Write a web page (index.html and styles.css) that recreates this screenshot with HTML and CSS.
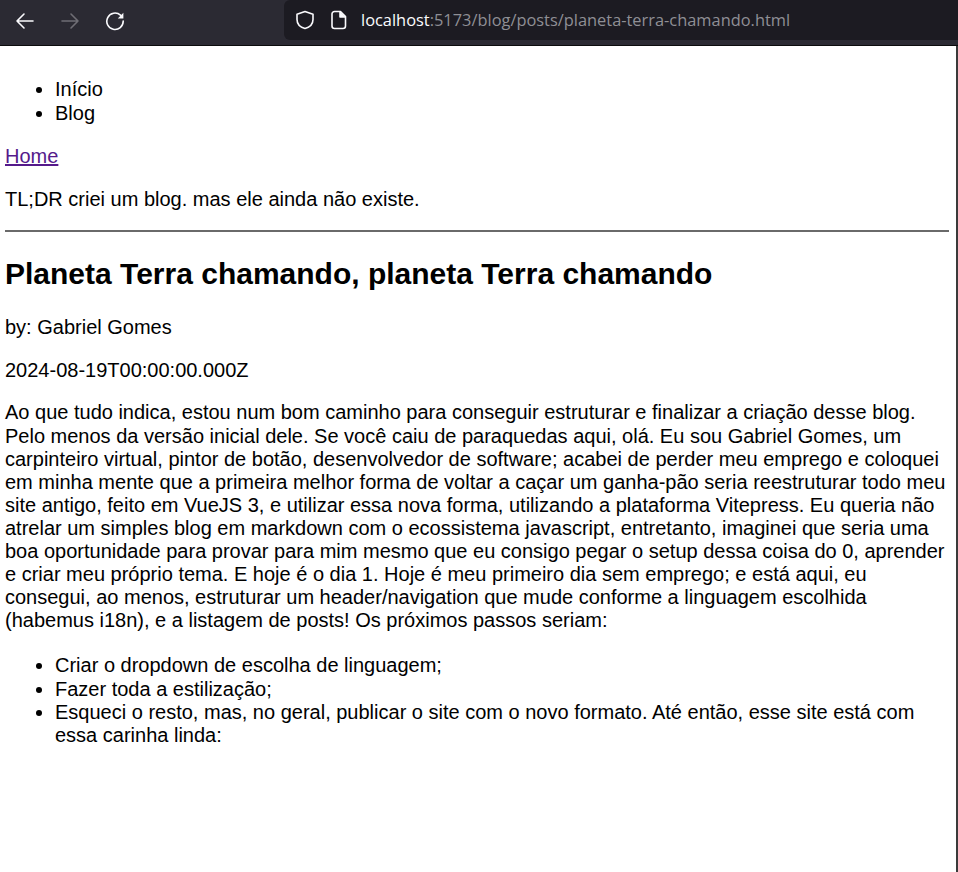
FILE: index.html
```html
<!DOCTYPE html>
<html lang="pt-BR">
<head>
  <meta charset="UTF-8">
  <title>Planeta Terra chamando, planeta Terra chamando</title>
  <link rel="stylesheet" href="styles.css">
</head>
<body>
  <div class="toolbar">
    <div class="toolbar-nav">
      <svg class="icon" viewBox="0 0 20 20" fill="none" stroke="#fbfbfe" stroke-width="1.6" stroke-linecap="round" stroke-linejoin="round"><path d="M2 10h16M9 3l-7 7 7 7"/></svg>
      <svg class="icon" viewBox="0 0 20 20" fill="none" stroke="#6f6e75" stroke-width="1.6" stroke-linecap="round" stroke-linejoin="round"><path d="M18 10H2M11 3l7 7-7 7"/></svg>
      <svg class="icon" viewBox="0 0 20 20" fill="none" stroke="#fbfbfe" stroke-width="1.6" stroke-linecap="round" stroke-linejoin="round"><path d="M15.500 4.200A8.200 8.200 0 1 0 18.200 10"/><path d="M18.400 1.800v5.600h-5.600z" fill="#fbfbfe" stroke="none"/></svg>
    </div>
    <div class="urlbar">
      <svg class="icon-shield" viewBox="0 0 20 20" fill="none" stroke="#fbfbfe" stroke-width="1.6" stroke-linejoin="round"><path d="M10 1.500l8 2.700v5.300c0 4.600-3.400 7.700-8 9-4.600-1.300-8-4.400-8-9V4.200z"/></svg>
      <svg class="icon-page" viewBox="0 0 16 20" fill="none" stroke="#fbfbfe" stroke-width="1.6" stroke-linejoin="round"><path d="M3.500 1.500h6l5 5v9.500a2.500 2.500 0 0 1-2.500 2.500h-8.500a2.500 2.500 0 0 1-2.500-2.500v-12a2.500 2.500 0 0 1 2.500-2.500z"/><path d="M9 1.500v5.500h5.500" fill="#fbfbfe"/></svg>
      <span class="url"><span class="url-host">localhost</span>:5173/blog/posts/planeta-terra-chamando.html</span>
    </div>
  </div>

  <div class="page">
    <ul class="site-nav">
      <li>Início</li>
      <li>Blog</li>
    </ul>
    <p><a href="#home">Home</a></p>
    <p class="tldr">TL;DR criei um blog. mas ele ainda não existe.</p>
    <hr>
    <h1>Planeta Terra chamando, planeta Terra chamando</h1>
    <p>by: Gabriel Gomes</p>
    <p>2024-08-19T00:00:00.000Z</p>
    <p>Ao que tudo indica, estou num bom caminho para conseguir estruturar e finalizar a criação desse blog. Pelo menos da versão inicial dele. Se você caiu de paraquedas aqui, olá. Eu sou Gabriel Gomes, um carpinteiro virtual, pintor de botão, desenvolvedor de software; acabei de perder meu emprego e coloquei em minha mente que a primeira melhor forma de voltar a caçar um ganha-pão seria reestruturar todo meu site antigo, feito em VueJS 3, e utilizar essa nova forma, utilizando a plataforma Vitepress. Eu queria não atrelar um simples blog em markdown com o ecossistema javascript, entretanto, imaginei que seria uma boa oportunidade para provar para mim mesmo que eu consigo pegar o setup dessa coisa do 0, aprender e criar meu próprio tema. E hoje é o dia 1. Hoje é meu primeiro dia sem emprego; e está aqui, eu consegui, ao menos, estruturar um header/navigation que mude conforme a linguagem escolhida (habemus i18n), e a listagem de posts! Os próximos passos seriam:</p>
    <ul class="post-list">
      <li>Criar o dropdown de escolha de linguagem;</li>
      <li>Fazer toda a estilização;</li>
      <li>Esqueci o resto, mas, no geral, publicar o site com o novo formato. Até então, esse site está com essa carinha linda:</li>
    </ul>
  </div>
</body>
</html>
```

FILE: styles.css
```css
html, body {
  height: 100%;
}

body {
  margin: 0;
  display: flex;
  flex-direction: column;
  overflow: hidden;
  background: #fff;
  color: #000;
  font-family: "Liberation Sans", Arial, sans-serif;
  font-size: 20px;
  line-height: 23.1px;
}

/* barra do navegador */
.toolbar {
  display: flex;
  flex-shrink: 0;
  height: 45px;
  background: #2b2a33;
  border-bottom: 1px solid #0c0c0d;
}

.toolbar-nav {
  display: flex;
  align-items: center;
  gap: 25px;
  width: 284px;
  height: 41px;
  padding-left: 15px;
  box-sizing: border-box;
}

.icon {
  width: 20px;
  height: 20px;
}

.urlbar {
  display: flex;
  align-items: center;
  flex: 1;
  height: 40px;
  padding-left: 11px;
  background: #1c1b22;
  border-radius: 6px 0 0 6px;
}

.icon-shield {
  width: 20px;
  height: 20px;
}

.icon-page {
  width: 16px;
  height: 20px;
  margin-left: 16px;
}

.url {
  margin-left: 14px;
  color: #8f8f95;
  font-family: "Open Sans", sans-serif;
  font-size: 16.4px;
  line-height: 20px;
}

.url-host {
  color: #fbfbfe;
}

/* conteudo */
.page {
  flex: 1;
  padding: 12.4px 7px 0 5px;
  border-right: 2px solid #3a3a3a;
}

ul {
  margin: 20px 0;
  padding-left: 50px;
}

.site-nav {
  margin-bottom: 19px;
  line-height: 23.6px;
}

.post-list {
  margin-top: 22.1px;
}

p {
  margin: 19.8px 0;
}

.tldr {
  margin-bottom: 18.9px;
}

a {
  color: #551a8b;
}

hr {
  height: 2px;
  margin: 0;
  border: 0;
  background: #6a6a6a;
}

h1 {
  margin: 24.7px 0;
  font-size: 30px;
  line-height: 34px;
}
```
